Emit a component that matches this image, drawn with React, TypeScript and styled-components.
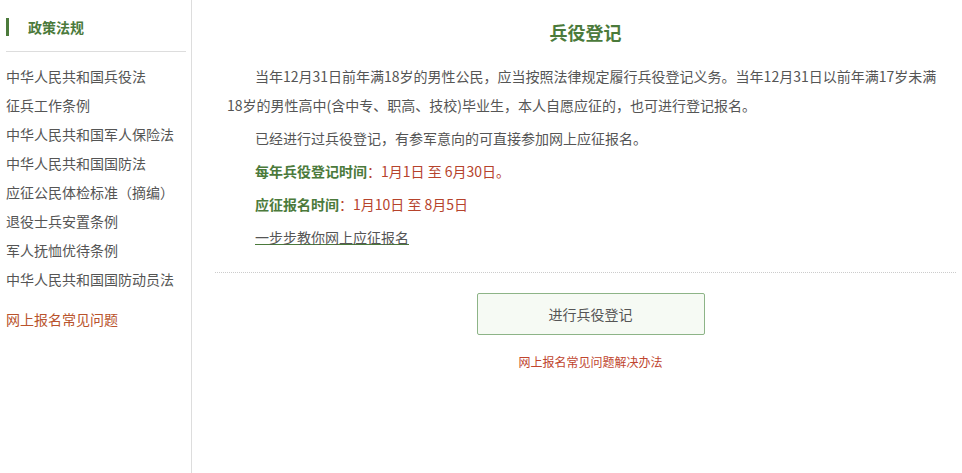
import styled, { createGlobalStyle } from "styled-components";

const GlobalStyle = createGlobalStyle`
    html, body {
        margin: 0;
        padding: 0;
        background: #fff;
    }
    body {
        font-family: "Noto Sans CJK SC", "Noto Sans", sans-serif;
        color: #555;
    }
`;

const Page = styled.div`
    display: flex;
    min-height: 473px;
`;

const Sidebar = styled.aside`
    box-sizing: border-box;
    width: 192px;
    flex-shrink: 0;
    padding: 18px 5px 0 6px;
    border-right: 1px solid #ddd;
`;

const SideHead = styled.div`
    padding-bottom: 15px;
    border-bottom: 1px solid #ddd;
`;

const SideTitle = styled.h3`
    margin: 0;
    height: 18px;
    line-height: 18px;
    padding-left: 19px;
    border-left: 3px solid #4b7a3b;
    font-size: 14px;
    font-weight: bold;
    color: #4b7a3b;
`;

const SideList = styled.ul`
    list-style: none;
    margin: 10px 0 0;
    padding: 0;
`;

const SideItem = styled.li<{ $hot?: boolean }>`
    font-size: 14px;
    line-height: 29px;
    color: ${props => (props.$hot ? "#b9532c" : "#555")};
    margin-top: ${props => (props.$hot ? "11px" : "0")};
    white-space: nowrap;
`;

const Main = styled.main`
    flex: 1;
    padding: 20px 6px 0 23px;
`;

const Title = styled.h2`
    margin: 0;
    text-align: center;
    font-size: 18px;
    line-height: 24px;
    font-weight: bold;
    color: #4b7a3b;
`;

const Body = styled.div`
    margin-top: 18px;
    padding: 0 12px 16px;
    border-bottom: 1px dotted #ccc;
`;

const Para = styled.p<{ $indent?: boolean }>`
    margin: 0 0 4px;
    font-size: 14px;
    line-height: 29px;
    color: #555;
    text-indent: ${props => (props.$indent ? "28px" : "0")};
    padding-left: ${props => (props.$indent ? "0" : "28px")};
`;

const Label = styled.strong`
    color: #4b7a3b;
    font-weight: bold;
`;

const DateText = styled.span`
    color: #b6432c;
`;

const GuideLink = styled.a`
    color: #555;
    text-decoration: underline;
    text-decoration-color: #4b7a3b;
`;

const Actions = styled.div`
    display: flex;
    flex-direction: column;
    align-items: center;
    padding-left: 10px;
`;

const RegisterButton = styled.button`
    margin-top: 20px;
    width: 228px;
    height: 42px;
    border: 1px solid #8db487;
    border-radius: 2px;
    background: #f6faf4;
    font-family: "Noto Sans CJK SC", sans-serif;
    font-size: 14px;
    color: #555;
    cursor: pointer;
`;

const HelpLink = styled.a`
    margin-top: 17px;
    font-size: 12px;
    line-height: 20px;
    color: #c0452e;
    text-decoration: none;
`;

const laws = [
    "中华人民共和国兵役法",
    "征兵工作条例",
    "中华人民共和国军人保险法",
    "中华人民共和国国防法",
    "应征公民体检标准（摘编）",
    "退役士兵安置条例",
    "军人抚恤优待条例",
    "中华人民共和国国防动员法",
];

function App() {
    return (
        <>
            <GlobalStyle />
            <Page>
                <Sidebar>
                    <SideHead>
                        <SideTitle>政策法规</SideTitle>
                    </SideHead>
                    <SideList>
                        {laws.map(law => (
                            <SideItem key={law}>{law}</SideItem>
                        ))}
                        <SideItem $hot>网上报名常见问题</SideItem>
                    </SideList>
                </Sidebar>
                <Main>
                    <Title>兵役登记</Title>
                    <Body>
                        <Para $indent>
                            当年12月31日前年满18岁的男性公民，应当按照法律规定履行兵役登记义务。当年12月31日以前年满17岁未满18岁的男性高中(含中专、职高、技校)毕业生，本人自愿应征的，也可进行登记报名。
                        </Para>
                        <Para $indent>已经进行过兵役登记，有参军意向的可直接参加网上应征报名。</Para>
                        <Para>
                            <Label>每年兵役登记时间</Label>
                            <DateText>：1月1日 至 6月30日。</DateText>
                        </Para>
                        <Para>
                            <Label>应征报名时间</Label>
                            <DateText>：1月10日 至 8月5日</DateText>
                        </Para>
                        <Para>
                            <GuideLink>一步步教你网上应征报名</GuideLink>
                        </Para>
                    </Body>
                    <Actions>
                        <RegisterButton>进行兵役登记</RegisterButton>
                        <HelpLink>网上报名常见问题解决办法</HelpLink>
                    </Actions>
                </Main>
            </Page>
        </>
    );
}

export default App;
